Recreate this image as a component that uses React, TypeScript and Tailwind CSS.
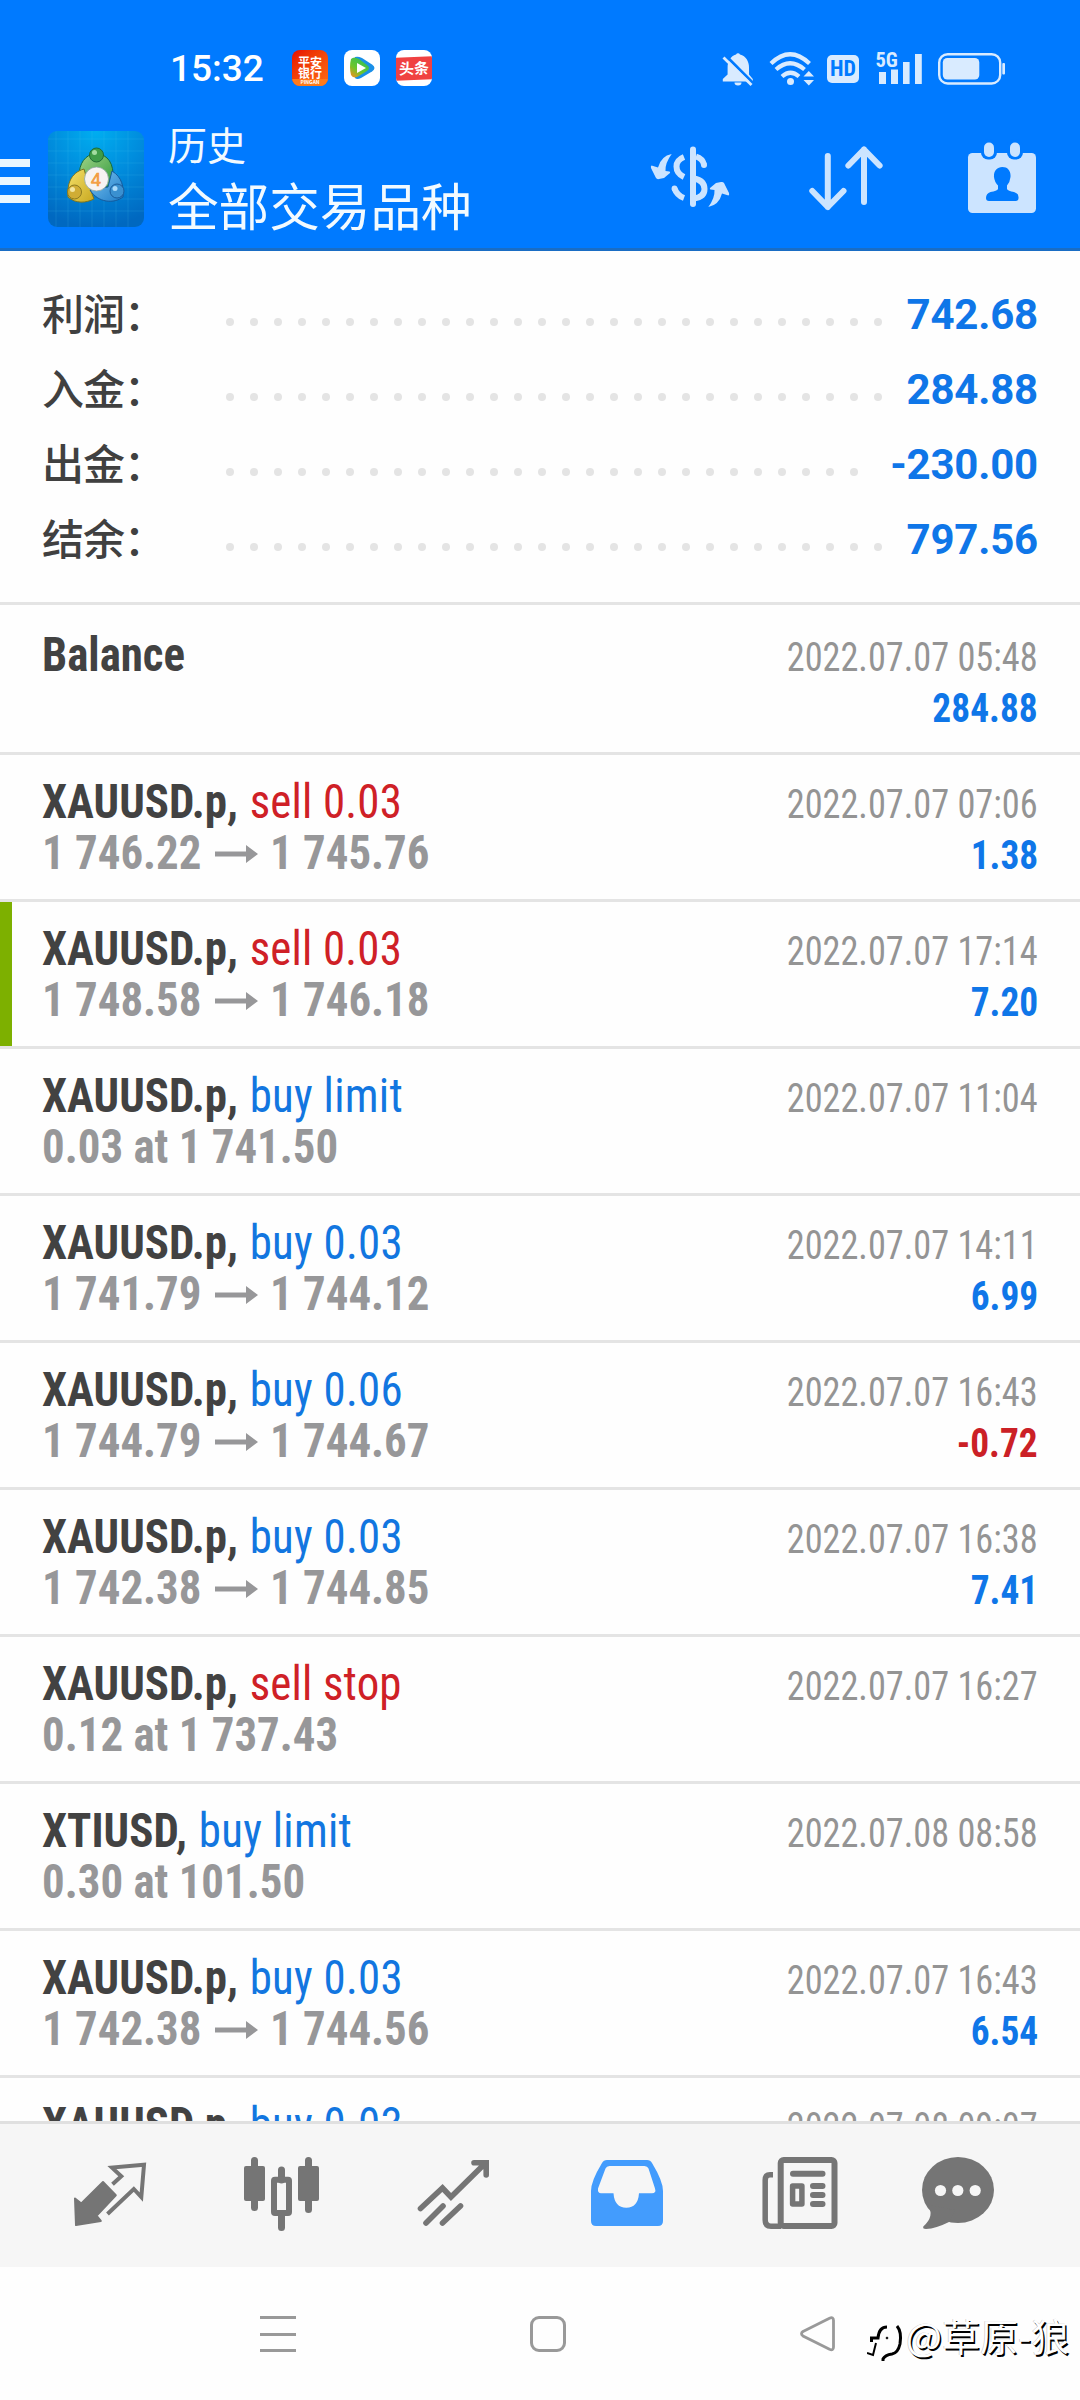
import type { ReactNode } from "react";

type IconProps = { x: number; y: number; w: number; h: number; className?: string; children: ReactNode };

// Icon paths share one drawing grid; x and y select the part each icon occupies.
function Icon({ x, y, w, h, className, children }: IconProps) {
  return (
    <svg width={w} height={h} viewBox={`${x} ${y} ${w} ${h}`} className={className} fill="none">
      {children}
    </svg>
  );
}

function StatusBar() {
  const c = "#d9ebff";
  return (
    <div className="mt-[24px] flex h-[90px] items-center pr-[74px] pl-[170px]">
      <span className="w-[122px] font-['Roboto'] text-[37px] leading-[44px] font-medium text-white">15:32</span>
      <div className="mb-[2px] flex gap-[16px]">
        <div className="flex h-[36px] w-[36px] flex-col items-center justify-start overflow-hidden rounded-[8px] bg-gradient-to-br from-[#e60000] to-[#ff6a13] pt-[6px] font-['Noto_Sans_CJK_SC'] text-[12px] leading-[11px] font-bold text-white">
          <span>平安</span>
          <span>银行</span>
          <span className="mt-[1px] h-[8px] w-full bg-[#ff7a1a] text-center text-[5px] leading-[6px]">PINGAN</span>
        </div>
        <div className="flex h-[36px] w-[36px] items-center justify-center rounded-[8px] bg-white">
          <svg width="28" height="26" viewBox="0 0 28 26">
            <defs>
              <linearGradient id="play" x1="0" y1="1" x2=".7" y2="0">
                <stop offset="0" stopColor="#ff8a1f" />
                <stop offset=".45" stopColor="#6cc62a" />
                <stop offset="1" stopColor="#2dbe60" />
              </linearGradient>
            </defs>
            <path d="M7 2Q10 1 14 3L24 9.5Q29 13 24 16.5L13 23Q9 25 7 23Z" fill="#1a8fe8" />
            <path d="M3 4Q6 1 11 4L19 10Q23 13 19 16L10 21.5Q5 24 3 20Q1 12 3 4Z" fill="url(#play)" />
            <path d="M9 8L18 13L9 18Z" fill="#fff" />
          </svg>
        </div>
        <div className="flex h-[36px] w-[36px] items-center justify-center overflow-hidden rounded-[8px] bg-white">
          <span className="h-[23px] w-[36px] -skew-y-2 bg-[#f04142] text-center font-['Noto_Sans_CJK_SC'] text-[15px] leading-[22px] font-bold whitespace-nowrap text-white">
            头条
          </span>
        </div>
      </div>
      <div className="mb-[2px] ml-auto flex items-center">
        <Icon x={721} y={50} w={34} h={37}>
          <path d="M736 54.5a2.3 2.3 0 0 1 4 0c6 1.500 9 7 9 13v7l3.800 4.500v2.500h-30v-2.500l4.800-4.500v-7c0-6 3-11.500 8.400-13z" fill={c} />
          <path d="M734.500 82.500h7a3.500 3 0 0 1-7 0z" fill={c} />
          <path d="M725.500 55.500L754.500 84.500" stroke="#007aff" strokeWidth="3" />
          <path d="M723.500 57.500L751.500 85" stroke={c} strokeWidth="2.800" />
        </Icon>
        <Icon x={768} y={50} w={48} h={37} className="ml-[13px]">
          <path d="M771 63.500Q790 45 809.500 63.500M776 69.500Q790 57 804.500 69.500M782 76.500Q790.500 69 799 76.500" stroke={c} strokeWidth="4.200" />
          <circle cx="790.500" cy="81.500" r="3.500" fill={c} />
          <path d="M803.500 76.500L808.800 71L814 76.500ZM803.500 80L808.800 85.500L814 80Z" fill={c} />
        </Icon>
        <div className="mt-[2px] ml-[11px] flex h-[28px] w-[32px] items-center justify-center rounded-[5px] bg-[#d9ebff] font-['Roboto_Condensed'] text-[22px] leading-[28px] font-bold text-[#007aff]">
          HD
        </div>
        <Icon x={874} y={46} w={50} h={44} className="ml-[15px]">
          <text x="875.500" y="67" fontFamily="Roboto Condensed" fontSize="20.500" fontWeight="700" fill={c}>5G</text>
          <path d="M879 72h7v12h-7zM891 69.500h7v14.500h-7zM903 62h6.600v22h-6.600zM915 54h6.800v30h-6.800z" fill={c} />
        </Icon>
        <Icon x={937} y={51} w={69} h={35} className="ml-[13px]">
          <rect x="939.200" y="54.200" width="61" height="29.300" rx="8.500" stroke={c} strokeWidth="2.400" />
          <rect x="942.800" y="58" width="36.500" height="21.500" rx="4.500" fill={c} />
          <rect x="1002.300" y="63" width="2.700" height="11.500" rx="1" fill={c} />
        </Icon>
      </div>
    </div>
  );
}

function AppLogo() {
  return (
    <svg width="96" height="96" viewBox="0 0 96 96" className="mt-[17px] ml-[18px] rounded-[9px]">
      <defs>
        <radialGradient id="bg" cx=".5" cy="0" r="1">
          <stop offset="0" stopColor="#00aef0" />
          <stop offset=".5" stopColor="#008bdc" />
          <stop offset="1" stopColor="#0068c0" />
        </radialGradient>
        <linearGradient id="green" x1="0" y1="0" x2="1" y2="1">
          <stop offset="0" stopColor="#a5d58a" />
          <stop offset="1" stopColor="#2f9a3c" />
        </linearGradient>
        <linearGradient id="yellow" x1="0" y1="0" x2="1" y2="1">
          <stop offset="0" stopColor="#f5e16a" />
          <stop offset="1" stopColor="#c8a820" />
        </linearGradient>
        <linearGradient id="blue" x1="0" y1="0" x2="1" y2="1">
          <stop offset="0" stopColor="#7cc4f0" />
          <stop offset="1" stopColor="#1e7cc8" />
        </linearGradient>
      </defs>
      <rect width="96" height="96" fill="url(#bg)" />
      <path d="M8 0V96M20 0V96M32 0V96M44 0V96M56 0V96M68 0V96M80 0V96M0 8H96M0 20H96M0 32H96M0 44H96M0 56H96M0 68H96M0 80H96" stroke="#4cc4f5" strokeOpacity=".16" />
      <path d="M31 46C31 32 37 24 48 22C60 24 66 32 65 48L60 56L48 50Z" fill="url(#green)" stroke="#176b3a" />
      <path d="M36 38C22 42 19 54 20 66C28 73 38 72 46 68L40 52Z" fill="url(#yellow)" stroke="#7a7420" />
      <path d="M64 40C74 46 76 56 75 66C66 73 50 72 42 59L60 56Z" fill="url(#blue)" stroke="#145a9c" />
      <circle cx="48.500" cy="24" r="7" fill="#3f9c48" stroke="#1f6b35" />
      <circle cx="46.500" cy="21.500" r="2.500" fill="#a3dca0" />
      <circle cx="26.500" cy="61" r="7" fill="#d0ad35" stroke="#8c7a20" />
      <circle cx="24.500" cy="58.500" r="2.500" fill="#f3e5a0" />
      <circle cx="69" cy="60" r="7" fill="#3a90d0" stroke="#1a5c9c" />
      <circle cx="67" cy="57.500" r="2.500" fill="#a9dafa" />
      <circle cx="48.500" cy="48" r="12" fill="#f7f3f2" stroke="#8ba5a0" strokeWidth=".8" />
      <text x="48" y="54.500" textAnchor="middle" fontFamily="Liberation Sans" fontSize="18" fill="#f7a74b" stroke="#f09030" strokeWidth=".6">4</text>
    </svg>
  );
}

function Toolbar() {
  const c = "#cce4ff";
  return (
    <div className="flex h-[134px] items-start">
      <div className="mt-[45px] flex w-[30px] flex-col gap-[10px]">
        <span className="h-[8px] bg-[#eaf6ff]" />
        <span className="h-[8px] bg-[#eaf6ff]" />
        <span className="h-[8px] bg-[#eaf6ff]" />
      </div>
      <AppLogo />
      <div className="ml-[24px] flex flex-col font-['Noto_Sans_CJK_SC'] text-[#f2faff]">
        <span className="mt-[1px] text-[39px] leading-[56px] font-normal">历史</span>
        <span className="text-[50.6px] leading-[66px] font-normal">全部交易品种</span>
      </div>
      <div className="mt-[25px] mr-[40px] ml-auto flex">
        <Icon x={648} y={139} w={84} h={78}>
          <rect x="690" y="146.500" width="6" height="60.500" rx="3" fill={c} />
          <path d="M684 157Q676.500 160 676.500 166.500Q676.500 173.500 684 177M696 156.500Q702.500 158.500 704 164.500M694 178.500Q704.500 180.500 704.500 189Q704.500 197 694 198.500" stroke={c} strokeWidth="6" />
          <circle cx="704" cy="165" r="3" fill={c} />
          <path d="M674.500 188.500Q677 195.500 684 198" stroke={c} strokeWidth="6" />
          <circle cx="674.500" cy="188.500" r="2.900" fill={c} />
          <path id="swap" d="M671.700 154Q661 156 658 167.500L651.500 165.500Q650.500 166 651 168L656 178Q657 179.500 659 179L664 178L670 173Q670.500 172 669.500 171.500L665.500 171Q665 163 671.700 154Z" fill={c} />
          <use href="#swap" transform="rotate(180 690 180.500)" />
        </Icon>
        <Icon x={806} y={139} w={80} h={78} className="mr-[78px] ml-[74px]">
          <path d="M827.800 156V207M812.300 191L827.800 207L843.500 191M864 202V149.500M848.400 165.500L864 149.500L879.600 165.500" stroke={c} strokeWidth="6" strokeLinecap="round" strokeLinejoin="round" />
        </Icon>
        <Icon x={964} y={139} w={76} h={78}>
          <rect x="968" y="153" width="68" height="60" rx="4.500" fill={c} />
          <rect x="981" y="139" width="16" height="20.500" rx="7" fill="#007aff" />
          <rect x="1007" y="139" width="16" height="20.500" rx="7" fill="#007aff" />
          <rect x="984" y="142.500" width="10" height="14.500" rx="5" fill={c} />
          <rect x="1010" y="142.500" width="10" height="14.500" rx="5" fill={c} />
          <path d="M1002.300 167C1008 167 1011 171 1010.500 177Q1010 182 1007 185.500V189Q1008 191 1014 192Q1019 193.500 1018.500 198Q1018.500 201 1015.500 201H989Q986 201 986 198Q986 193.500 990.500 192Q997 191 998 189V185.500Q994.500 182 994 177C993.500 171 997 167 1002.300 167Z" fill="#007aff" />
        </Icon>
      </div>
    </div>
  );
}

const summary = [
  { label: "利润：", value: "742.68", dots: 28 },
  { label: "入金：", value: "284.88", dots: 28 },
  { label: "出金：", value: "-230.00", dots: 27 },
  { label: "结余：", value: "797.56", dots: 28 },
];

function Summary() {
  return (
    <section className="h-[354px] shrink-0 border-b-[3px] border-[#e4e4e4] pt-[26px] pr-[42px] pl-[42px]">
      {summary.map((s) => (
        <div key={s.label} className="flex h-[75px] items-center">
          <span className="mb-[6px] w-[184px] font-['Noto_Sans_CJK_SC'] text-[42px] leading-[62px] font-medium tracking-[-1px] text-[#404040]">{s.label}</span>
          <div className="mt-[14px] flex gap-[16px]">
            {Array.from({ length: s.dots }, (_, i) => (
              <span key={i} className="h-[8px] w-[8px] rounded-full bg-[#e4e4e4]" />
            ))}
          </div>
          <span className="ml-auto font-['Roboto'] text-[42px] leading-[60px] font-bold tracking-[-0.2px] text-[#0f76e8]">{s.value}</span>
        </div>
      ))}
    </section>
  );
}

type Deal = { symbol: string; side: string; detail?: string; from?: string; to?: string; date: string; amount?: string; marked?: boolean };

const deals: Deal[] = [
  { symbol: "XAUUSD.p,", side: "sell 0.03", from: "1 746.22", to: "1 745.76", date: "2022.07.07 07:06", amount: "1.38" },
  { symbol: "XAUUSD.p,", side: "sell 0.03", from: "1 748.58", to: "1 746.18", date: "2022.07.07 17:14", amount: "7.20", marked: true },
  { symbol: "XAUUSD.p,", side: "buy limit", detail: "0.03 at 1 741.50", date: "2022.07.07 11:04" },
  { symbol: "XAUUSD.p,", side: "buy 0.03", from: "1 741.79", to: "1 744.12", date: "2022.07.07 14:11", amount: "6.99" },
  { symbol: "XAUUSD.p,", side: "buy 0.06", from: "1 744.79", to: "1 744.67", date: "2022.07.07 16:43", amount: "-0.72" },
  { symbol: "XAUUSD.p,", side: "buy 0.03", from: "1 742.38", to: "1 744.85", date: "2022.07.07 16:38", amount: "7.41" },
  { symbol: "XAUUSD.p,", side: "sell stop", detail: "0.12 at 1 737.43", date: "2022.07.07 16:27" },
  { symbol: "XTIUSD,", side: "buy limit", detail: "0.30 at 101.50", date: "2022.07.08 08:58" },
  { symbol: "XAUUSD.p,", side: "buy 0.03", from: "1 742.38", to: "1 744.56", date: "2022.07.07 16:43", amount: "6.54" },
  { symbol: "XAUUSD.p,", side: "buy 0.03", date: "2022.07.08 09:07" },
];

function RightColumn({ date, amount }: { date: string; amount?: string }) {
  return (
    <div className="flex flex-col items-end pt-[3px] text-[40px] leading-[51px] whitespace-nowrap">
      <span className="origin-right scale-x-[0.907] text-[#949494]">{date}</span>
      {amount && (
        <span className={amount.startsWith("-") ? "origin-right scale-x-[0.935] font-bold text-[#cb2026]" : "origin-right scale-x-[0.935] font-bold text-[#0f76e8]"}>
          {amount}
        </span>
      )}
    </div>
  );
}

function DealRow({ deal }: { deal: Deal }) {
  return (
    <div className="relative flex h-[147px] shrink-0 justify-between border-b-[3px] border-[#e4e4e4] pt-[21px] pr-[42px] pl-[42px]">
      {deal.marked && <span className="absolute top-0 left-0 h-[144px] w-[12px] bg-[#7db000]" />}
      <div className="text-[48px] leading-[51px] whitespace-nowrap">
        <div className="origin-left scale-x-[0.935]">
          <span className="font-bold text-[#424242]">{deal.symbol}</span>{" "}
          <span className={deal.side.startsWith("sell") ? "ml-[1.5px] tracking-[0.2px] text-[#cf2026]" : "ml-[1.5px] tracking-[0.3px] text-[#1276e0]"}>{deal.side}</span>
        </div>
        {deal.detail && <div className="origin-left scale-x-[0.935] font-bold text-[#979799]">{deal.detail}</div>}
        {deal.from && (
          <div className="flex font-bold text-[#979799]">
            <span className="w-[173px] origin-left scale-x-[0.935]">{deal.from}</span>
            <svg width="43" height="51" viewBox="0 0 43 51" className="shrink-0">
              <path d="M0 24.500H31V18L43 27L31 36V29.500H0Z" fill="#979799" />
            </svg>
            <span className="ml-[12px] origin-left scale-x-[0.935]">{deal.to}</span>
          </div>
        )}
      </div>
      <RightColumn date={deal.date} amount={deal.amount} />
    </div>
  );
}

function TabBar() {
  const g = "#757575";
  return (
    <nav className="flex h-[146px] shrink-0 items-start gap-[76px] border-t-[3px] border-[#e0e0e0] bg-[#f6f6f6] pt-[21px] pl-[62px]">
      <Icon x={62} y={2145} w={96} h={96}>
        <path d="M75 2198.500L81.300 2203.500L103 2182L115.800 2195.200L96.500 2215.700L100.800 2221L76 2225Z" fill={g} stroke={g} strokeWidth="2" strokeLinejoin="round" />
        <path d="M112.500 2184.300L121.300 2176.300L112 2167.600L144 2164.800L141.300 2197L133.800 2189L107.500 2214" stroke={g} strokeWidth="4" />
      </Icon>
      <Icon x={234} y={2145} w={96} h={96}>
        <path d="M254.500 2160.500V2207.500M308.500 2160.500V2209.500M281.500 2170V2180M281.500 2214V2227.500" stroke={g} strokeWidth="7" strokeLinecap="round" />
        <rect x="244" y="2166" width="21" height="35" rx="2" fill={g} />
        <rect x="298" y="2166" width="21" height="35" rx="2" fill={g} />
        <rect x="274" y="2179.700" width="15" height="33.300" rx="1" stroke={g} strokeWidth="6" />
      </Icon>
      <Icon x={406} y={2145} w={96} h={96}>
        <path d="M420.500 2208.500L442.500 2188L451 2197L485 2163.500M474 2162.800H486.200V2175M426 2223L443 2206M442.500 2223L460.500 2206" stroke={g} strokeWidth="5.600" strokeLinecap="round" />
      </Icon>
      <Icon x={578} y={2145} w={96} h={96}>
        <path fillRule="evenodd" fill="#439cfd" d="M607 2160H647Q650.500 2160 652 2163Q663 2181 663 2191V2221Q663 2226 658 2226H596Q591 2226 591 2221V2191Q591 2181 602 2163Q603.500 2160 607 2160ZM609.500 2166Q606.500 2166 605.500 2168.500L598 2188.500Q597.500 2193.300 601 2193.300H613.500Q614.500 2207.700 626.300 2207.700Q638 2207.700 639 2193.300H652Q656.500 2193.300 655 2188.500L648.500 2168.500Q647.500 2166 644.500 2166Z" />
      </Icon>
      <Icon x={750} y={2145} w={96} h={96}>
        <rect x="780.700" y="2160" width="53.800" height="66" rx="3" stroke={g} strokeWidth="6" />
        <path d="M773 2174.800H770Q765.200 2174.800 765.200 2180V2220Q765.200 2226.200 771 2226.200H781" stroke={g} strokeWidth="5.500" />
        <path d="M793 2173.700H822.500M813 2186H822.500M813 2195H822.500M813 2204H822.500" stroke={g} strokeWidth="6" strokeLinecap="round" />
        <rect x="792.600" y="2186" width="9.300" height="18" stroke={g} strokeWidth="5.500" strokeLinejoin="round" />
      </Icon>
      <Icon x={922} y={2145} w={96} h={96}>
        <ellipse cx="958" cy="2190" rx="36" ry="33" fill={g} />
        <path d="M928 2205Q935 2216 923.300 2226.500Q922.500 2229 926 2229Q936 2228.500 949 2222L955 2210Z" fill={g} />
        <circle cx="940.500" cy="2190.500" r="5.600" fill="#f6f6f6" />
        <circle cx="957.800" cy="2190.500" r="5.600" fill="#f6f6f6" />
        <circle cx="975.200" cy="2190.500" r="5.600" fill="#f6f6f6" />
      </Icon>
    </nav>
  );
}

function SystemNav() {
  return (
    <div className="flex h-[133px] shrink-0 items-start bg-[#fefefe] pt-[49px] pl-[260px]">
      <div className="flex w-[36px] flex-col gap-[13.500px]">
        <span className="h-[3px] bg-[#999]" />
        <span className="h-[3px] bg-[#999]" />
        <span className="h-[3px] bg-[#999]" />
      </div>
      <span className="ml-[234px] h-[36px] w-[36px] rounded-[9px] border-[3px] border-[#999]" />
      <Icon x={798} y={2316} w={40} h={36} className="ml-[232px]">
        <path d="M803 2331.500L829.500 2318.200Q833.500 2316.500 833.500 2320.500V2347Q833.500 2351 829.500 2349.200L803 2336Q800 2333.700 803 2331.500Z" stroke="#999" strokeWidth="2.800" />
      </Icon>
      <div className="ml-[29px] flex items-start">
        <svg width="40" height="44" viewBox="0 0 40 44" className="mt-[8px]" fill="none" stroke="#000">
          <path d="M20 3Q12 3 11 14H4.500V18" strokeWidth="3" />
          <path d="M9 19L6 31L0 29" strokeWidth="2" />
          <path d="M30 2Q35 8 33 20Q31 29 25 30Q18 31 16 35V37" strokeWidth="3" />
          <circle cx="20" cy="14" r="1" fill="#000" strokeWidth=".6" />
        </svg>
        <span className="-mt-[9px] -ml-[1px] font-['Noto_Sans_CJK_SC'] text-[38px] leading-[56px] font-normal whitespace-nowrap text-white [text-shadow:1.500px_1.500px_0.500px_#000,-0.500px_-0.500px_0.500px_#bbb]">
          @草原-狼
        </span>
      </div>
    </div>
  );
}

export default function App() {
  return (
    <main className="flex h-[2400px] w-[1080px] flex-col overflow-hidden bg-[#fefefe] font-['Roboto_Condensed',sans-serif]">
      <header className="h-[251px] shrink-0 border-b-[3px] border-[#1a6dc4] bg-[#007aff]">
        <StatusBar />
        <Toolbar />
      </header>
      <div className="flex h-[1870px] shrink-0 flex-col overflow-hidden">
        <Summary />
        <div className="flex h-[150px] shrink-0 justify-between border-b-[3px] border-[#e4e4e4] px-[42px] pt-[24px]">
          <span className="origin-left scale-x-[0.935] text-[48px] leading-[51px] font-bold text-[#424242]">Balance</span>
          <RightColumn date="2022.07.07 05:48" amount="284.88" />
        </div>
        {deals.map((d, i) => (
          <DealRow key={i} deal={d} />
        ))}
      </div>
      <TabBar />
      <SystemNav />
    </main>
  );
}
